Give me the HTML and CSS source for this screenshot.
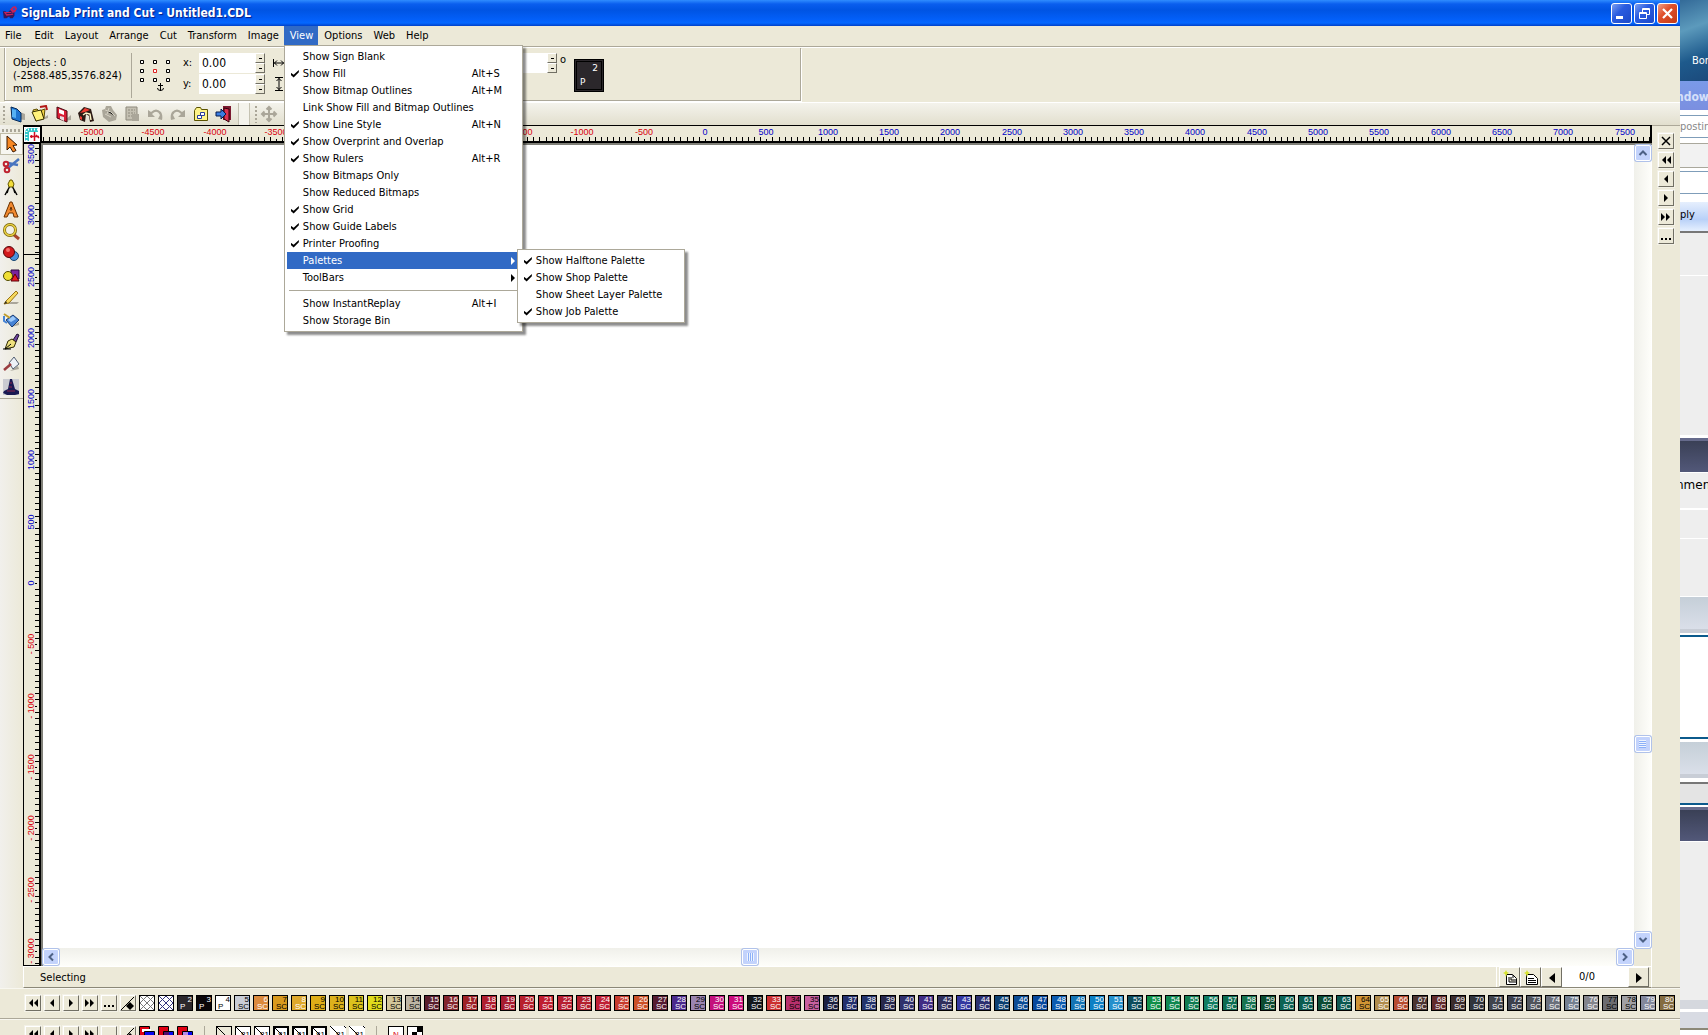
FILE: index.html
```html
<!DOCTYPE html>
<html lang="en">
<head>
    <meta charset="UTF-8" />
    <title>SignLab Print and Cut - Untitled1.CDL</title>
    <link rel="stylesheet" href="styles.css">
</head>
<body>
    <div class="app">
        <header class="titlebar">
            <svg class="logo" viewBox="0 0 18 18"><path d="M1 7h3l2 2 3-3 5 1v5l-2 3H9l-1-2-3 2H2z" fill="#35195c"/><path d="M9 5l3-3 3-1 2 3-2 4-3 1zM2 8h8l3 3-8 1z" fill="#c3225c"/><path d="M12 4l2-1 1 2-2 1z" fill="#1a56d8"/><path d="M5 9h6v1H5z" fill="#211a58"/></svg>
            <h1>SignLab Print and Cut - Untitled1.CDL</h1>
            <button class="win" aria-label="Minimize"><svg viewBox="0 0 19 19"><path d="M4 12h7v3H4z" fill="#fff"/></svg></button>
            <button class="win" aria-label="Restore"><svg viewBox="0 0 19 19"><path d="M7.500 8V4.500h7v6H12M7 5.500h8M4.500 8.500h7v6h-7zM4 9.500h8" fill="none" stroke="#fff"/></svg></button>
            <button class="win win-close" aria-label="Close"><svg viewBox="0 0 19 19"><path d="M5 5l9 9M14 5l-9 9" stroke="#fff" stroke-width="2.200"/></svg></button>
        </header>

        <nav class="menubar">
            <button>File</button>
            <button>Edit</button>
            <button>Layout</button>
            <button>Arrange</button>
            <button>Cut</button>
            <button>Transform</button>
            <button>Image</button>
            <div class="menu-holder">
                <button class="open">View</button>
                <div class="menu">
                    <button class="item"><i></i><span>Show Sign Blank</span></button>
                    <button class="item checked"><i></i><span>Show Fill</span><kbd>Alt+S</kbd></button>
                    <button class="item"><i></i><span>Show Bitmap Outlines</span><kbd>Alt+M</kbd></button>
                    <button class="item"><i></i><span>Link Show Fill and Bitmap Outlines</span></button>
                    <button class="item checked"><i></i><span>Show Line Style</span><kbd>Alt+N</kbd></button>
                    <button class="item checked"><i></i><span>Show Overprint and Overlap</span></button>
                    <button class="item checked"><i></i><span>Show Rulers</span><kbd>Alt+R</kbd></button>
                    <button class="item"><i></i><span>Show Bitmaps Only</span></button>
                    <button class="item"><i></i><span>Show Reduced Bitmaps</span></button>
                    <button class="item checked"><i></i><span>Show Grid</span></button>
                    <button class="item checked"><i></i><span>Show Guide Labels</span></button>
                    <button class="item checked"><i></i><span>Printer Proofing</span></button>
                    <div class="menu-holder">
                        <button class="item active more"><i></i><span>Palettes</span></button>
                        <div class="menu submenu">
                            <button class="item checked"><i></i><span>Show Halftone Palette</span></button>
                            <button class="item checked"><i></i><span>Show Shop Palette</span></button>
                            <button class="item"><i></i><span>Show Sheet Layer Palette</span></button>
                            <button class="item checked"><i></i><span>Show Job Palette</span></button>
                        </div>
                    </div>
                    <button class="item more"><i></i><span>ToolBars</span></button>
                    <hr>
                    <button class="item"><i></i><span>Show InstantReplay</span><kbd>Alt+I</kbd></button>
                    <button class="item"><i></i><span>Show Storage Bin</span></button>
                </div>
            </div>
            <button>Options</button>
            <button>Web</button>
            <button>Help</button>
        </nav>

        <section class="props">
            <div class="props-box">
                <p class="info">Objects : 0<br>(-2588.485,3576.824)<br>mm</p>
                <svg class="anchors" viewBox="0 0 34 36"><g fill="#fff" stroke="#000"><path d="M1.500 1.500h3v3h-3zM14.500 1.500h3v3h-3zM27.500 1.500h3v3h-3zM1.500 10.500h3v3h-3zM27.500 10.500h3v3h-3zM1.500 19.500h3v3h-3zM14.500 19.500h3v3h-3zM27.500 19.500h3v3h-3z"/><path d="M14.500 10.500h3v3h-3z" stroke="#d22"/></g><path d="M21.500 24v8M19 26.500h5M18.500 29q0 2.500 3 2.500t3-2.500" fill="none" stroke="#000"/></svg>
                <div class="coords">
                    <label for="pos-x">x:</label>
                    <input id="pos-x" type="text" value="0.00">
                    <span class="spin"><button aria-label="Increase x"></button><button aria-label="Decrease x"></button></span>
                    <svg viewBox="0 0 14 14"><path d="M1.500 3v8M12.500 3v8M2 7h10M5 4.500L2.500 7 5 9.500M9 4.500L11.500 7 9 9.500" fill="none" stroke="#000"/></svg>
                    <label for="pos-y">y:</label>
                    <input id="pos-y" type="text" value="0.00">
                    <span class="spin"><button aria-label="Increase y"></button><button aria-label="Decrease y"></button></span>
                    <svg viewBox="0 0 14 14"><path d="M3 .5h8M3 13.500h8M7 1v12M4.500 4L7 1.500 9.500 4M4.500 10L7 12.500 9.500 10" fill="none" stroke="#000"/></svg>
                </div>
                <div class="angle">
                    <input type="text" aria-label="Rotation angle">
                    <span class="spin"><button aria-label="Increase angle"></button><button aria-label="Decrease angle"></button></span>
                    <span class="degree">o</span>
                </div>
                <button class="fill-color"><b>2</b><span>P</span></button>
            </div>
        </section>

        <section class="toolbar">
            <span class="grip"></span>
            <button aria-label="New"><svg viewBox="0 0 18 18"><path d="M8 14l9 1v-6l-5-2z" fill="#aaa69a"/><path d="M3 2l6 2 4 4v9l-9-3z" fill="#1d74d0" stroke="#052a58"/><path d="M4 4l4 1v8l-4-1z" fill="#55b1f4"/></svg></button>
            <button aria-label="Open"><svg viewBox="0 0 18 18"><path d="M8 16l9-3v-3z" fill="#aaa69a"/><path d="M2 5l4-1 2 2 6-2-1 9-8 3z" fill="#efd043" stroke="#5c4b00"/><path d="M1 7l9-2 3 9-8 2z" fill="#fff27b" stroke="#332d00"/><path d="M9 2l6-1 1 4" fill="none" stroke="#b21616" stroke-width="2"/></svg></button>
            <button aria-label="Save"><svg viewBox="0 0 18 18"><path d="M10 16l7-1v-5z" fill="#aaa69a"/><path d="M3 2l10 4v11L3 13z" fill="#d81e35" stroke="#490812"/><path d="M5 4l5 2v4L5 8z" fill="#fff"/><path d="M6 11l4 1v4l-4-2z" fill="#e9dfe1"/></svg></button>
            <button aria-label="Import"><svg viewBox="0 0 18 18"><path d="M1 8l6-6 7 2 3 12-4 1-1-6-3-2-1 8-5-2z" fill="#2c1a14"/><path d="M3 8l5-5 5 2-5 2zM3 11l2 1v3l-2-1z" fill="#f03b31"/><path d="M6 10l3-2 4 1 1 6" fill="none" stroke="#fff6c9" stroke-width="1.500"/></svg></button>
            <button class="off" aria-label="Print"><svg viewBox="0 0 18 18"><path d="M6 1h5l2 4 4 5-1 5-7 2-6-5-1-7 3-1z" fill="#aaa699"/><path d="M5 5l6 2 4 4M5 9l6 3M9 3l-2 6" stroke="#d5d1c3"/></svg></button>
            <button class="off" aria-label="Paste"><svg viewBox="0 0 18 18"><path d="M3 2h11v13H3z" fill="#c4c0b2" stroke="#8d897c"/><path d="M5 5h7M5 8h7M5 11h7" stroke="#8d897c" stroke-dasharray="2 1"/><path d="M9 9h7v7H9z" fill="#aaa699"/></svg></button>
            <button class="off" aria-label="Undo"><svg viewBox="0 0 18 18"><path d="M2 5v7h7L6 9q5-5 8 1l-2 4 4 1q1-5-1-8-5-5-10 0z" fill="#aaa699"/></svg></button>
            <button class="off" aria-label="Redo"><svg viewBox="0 0 18 18"><path d="M16 5v7H9l3-3Q7 4 4 10l2 4-4 1Q1 10 3 7q5-5 10 0z" fill="#aaa699"/></svg></button>
            <button aria-label="Folder"><svg viewBox="0 0 18 18"><path d="M2.500 5.500l2-3h4l1 2h6v11h-13z" fill="#fdf389" stroke="#5b5300"/><path d="M8.500 7.500h4v3h-4zM5.500 10.500h4v3h-4z" fill="#fff" stroke="#273b9b"/></svg></button>
            <button aria-label="Exit"><svg viewBox="0 0 18 18"><path d="M8 1h8v14H8z" fill="#7b1930"/><path d="M9 3l5 1v13l-5-3z" fill="#dc3152" stroke="#32000b"/><path d="M11 9L6 4v3H1v4h5v3z" fill="#3b7de2" stroke="#071a4d"/></svg></button>
            <span class="break"></span>
            <span class="grip"></span>
            <button class="off" aria-label="Move"><svg viewBox="0 0 18 18"><path d="M9 2v14M2 9h14M6.500 4.500L9 2l2.500 2.500M6.500 13.500L9 16l2.500-2.500M4.500 6.500L2 9l2.500 2.500M13.500 6.500L16 9l-2.500 2.500" fill="none" stroke="#aaa699" stroke-width="2"/></svg></button>
            <button class="off" aria-label="Select area"><svg viewBox="0 0 18 18"><path d="M2 2h14v14H2z" fill="#c4c0b2" stroke="#8d897c" stroke-dasharray="2 1"/></svg></button>
        </section>

        <main class="workspace">
            <aside class="tools">
                <button class="on" aria-label="Select"><svg viewBox="0 0 18 18"><path d="M5 1l10 9-4 .5 3 5-3 1.500-3-5-3 3z" fill="#f78824" stroke="#3d1900"/></svg></button>
                <button aria-label="Cut"><svg viewBox="0 0 18 18"><path d="M17 2L6 11M16 8L6 6" stroke="#4774bf" stroke-width="2.500"/><circle cx="4" cy="7" r="2.300" fill="none" stroke="#be2231" stroke-width="2"/><circle cx="5" cy="13" r="2.300" fill="none" stroke="#be2231" stroke-width="2"/></svg></button>
                <button aria-label="Node edit"><svg viewBox="0 0 18 18"><path d="M8 7l-5 9M10 7l5 9M6 11l-1 3M12 11l1 3" fill="none" stroke="#000" stroke-width="1.500"/><path d="M8 1h2l2 4-1 3H7L6 5z" fill="#f3dd3b" stroke="#645700"/></svg></button>
                <button aria-label="Text"><svg viewBox="0 0 18 18"><path d="M12 16h5l-4-5z" fill="#aaa69a"/><path d="M8 1h2l6 15h-4l-1-4H7l-2 4H2zM8 9h2L9 6z" fill="#f28a30" fill-rule="evenodd" stroke="#693000"/></svg></button>
                <button aria-label="Zoom"><svg viewBox="0 0 18 18"><path d="M11 11l6 5" stroke="#a8452c" stroke-width="3"/><circle cx="8" cy="7" r="5.500" fill="#f3f1e7" stroke="#77620a" stroke-width="3"/><circle cx="8" cy="7" r="5.500" fill="none" stroke="#e8cf43" stroke-width="1.500"/></svg></button>
                <button aria-label="Weld"><svg viewBox="0 0 18 18"><circle cx="12" cy="11" r="4.500" fill="#4a91dc" stroke="#17456e"/><circle cx="7" cy="7" r="5.500" fill="#d3191c" stroke="#520608"/><circle cx="6" cy="5" r="2" fill="#f4726c"/></svg></button>
                <button aria-label="Shapes"><svg viewBox="0 0 18 18"><path d="M9 3h8v9H9z" fill="#7a239f" stroke="#29083a"/><circle cx="6" cy="9" r="4.500" fill="#f0df35" stroke="#4d4600"/><path d="M9 14l4-7 4 7z" fill="#e81d28" stroke="#5d0007"/></svg></button>
                <button aria-label="Draw"><svg viewBox="0 0 18 18"><path d="M4 15h11l2-2H9z" fill="#aaa69a"/><path d="M14 2l2 2-9 10-5 1 2-3z" fill="#f6d95d" stroke="#997313"/><path d="M2 15l2-3 1 2z" fill="#222"/></svg></button>
                <button aria-label="Fill"><svg viewBox="0 0 18 18"><path d="M9 16l8-2v-3z" fill="#aaa69a"/><path d="M4 9l7-5 6 5-7 7z" fill="#4683d5" stroke="#163971"/><path d="M6 9l5-4 3 3-5 3z" fill="#9cc9fa"/><path d="M2 3l6 4" fill="none" stroke="#c09c2c" stroke-width="2"/><path d="M2 5v5l3 2" fill="none" stroke="#4683d5" stroke-width="2"/></svg></button>
                <button aria-label="Pen"><svg viewBox="0 0 18 18"><path d="M11 7l4-6 2 1-3 7z" fill="#70459c" stroke="#1a102b"/><path d="M6 8l4-2 4 3-2 5-9 2z" fill="#efe17d" stroke="#2e2800"/><path d="M1 16h8M3 16l6-5" stroke="#000"/></svg></button>
                <button aria-label="Erase"><svg viewBox="0 0 18 18"><path d="M8 16l9-2-1-3z" fill="#aaa69a"/><path d="M7 8l5-6 5 7-6 5z" fill="#edf1f7" stroke="#505d70"/><path d="M2 15l7-6" stroke="#9a3c40" stroke-width="2.500"/></svg></button>
                <button aria-label="Wizard"><svg viewBox="0 0 18 18"><path d="M1 1h16v16H1z" fill="#c9cbd1"/><path d="M8 1h2l3 10 4 2v3l-4 1H5l-4-2 1-2 4-2z" fill="#191953"/><path d="M8 5h2M7 9h3M5 13h8" stroke="#8c274c"/></svg></button>
            </aside>

            <div class="view">
                <div class="corner"><svg viewBox="0 0 16 15"><path d="M1 1h13v4H5v9H1z" fill="#35c7ca"/><path d="M1 2.500h13M2.500 1v13" stroke="#fff" stroke-dasharray="1 2" stroke-width="2"/><path d="M10.500 5v9M6 9.500h9M7.500 8v3M12 8l3 3" stroke="#d01022" stroke-width="1.500"/></svg></div>
                <svg class="ruler ruler-x" id="ruler-x"></svg>
                <svg class="ruler ruler-y" id="ruler-y"></svg>
                <div class="sheet">
                    <div class="paper"></div>
                    <div class="scroll scroll-v">
                        <button aria-label="Scroll up"><svg viewBox="0 0 10 10"><path d="M1.500 7L5 3.500 8.500 7" /></svg></button>
                        <span class="space-before"></span>
                        <b class="thumb"></b>
                        <span class="space-after"></span>
                        <button aria-label="Scroll down"><svg viewBox="0 0 10 10"><path d="M1.500 3L5 6.500 8.500 3" /></svg></button>
                    </div>
                    <div class="scroll scroll-h">
                        <button aria-label="Scroll left"><svg viewBox="0 0 10 10"><path d="M7 1.500L3.500 5 7 8.500" /></svg></button>
                        <span class="space-before"></span>
                        <b class="thumb"></b>
                        <span class="space-after"></span>
                        <button aria-label="Scroll right"><svg viewBox="0 0 10 10"><path d="M3 1.500L6.500 5 3 8.500" /></svg></button>
                    </div>
                    <div class="scroll-end"></div>
                </div>
                <footer class="status">
                    <span class="message">Selecting</span>
                    <button aria-label="Add sheet copy"><svg viewBox="0 0 16 16"><path d="M4.500 4.500h6l4 4v6h-10zM7 7v5h7M9 7v3h5M11 5v3" fill="#fff" stroke="#000"/><path d="M1 3l2-1 1-2 1 2 2 1-2 1-1 3-1-3z" fill="#d7e32e"/></svg></button>
                    <button aria-label="Add sheet"><svg viewBox="0 0 16 16"><path d="M3.500 4.500h7l4 4v6h-11z" fill="#fff" stroke="#000"/><path d="M5 8.500h6M5 10.500h8M5 12.500h8" stroke="#000"/><path d="M1 3l2-1 1-2 1 2 2 1-2 1-1 3-1-3z" fill="#d7e32e"/></svg></button>
                    <button aria-label="Previous sheet"><svg viewBox="0 0 16 16"><path d="M11 3v10L5 8z"/></svg></button>
                    <input type="text" value="0/0" aria-label="Sheet">
                    <button aria-label="Next sheet"><svg viewBox="0 0 16 16"><path d="M5 3v10l6-5z"/></svg></button>
                </footer>
            </div>

            <aside class="dock">
                <button class="key" aria-label="Close palette"><svg viewBox="0 0 14 14"><path d="M3 3l8 8M11 3l-8 8" stroke="#000" stroke-width="1.500"/></svg></button>
                <button class="key" aria-label="First"><svg viewBox="0 0 14 14"><path d="M7 3v8L3 7zM12 3v8L8 7z"/></svg></button>
                <button class="key" aria-label="Previous"><svg viewBox="0 0 14 14"><path d="M9 3v8L5 7z"/></svg></button>
                <button class="key" aria-label="Next"><svg viewBox="0 0 14 14"><path d="M5 3v8l4-4z"/></svg></button>
                <button class="key" aria-label="Last"><svg viewBox="0 0 14 14"><path d="M2 3v8l4-4zM7 3v8l4-4z"/></svg></button>
                <button class="key" aria-label="More"><svg viewBox="0 0 14 14"><path d="M2 9h2v2H2zM6 9h2v2H6zM10 9h2v2h-2z"/></svg></button>
            </aside>
        </main>

        <section class="palette" id="palette">
            <button class="key" aria-label="First"><svg viewBox="0 0 14 14"><path d="M7 3v8L3 7zM12 3v8L8 7z"/></svg></button>
            <button class="key" aria-label="Previous"><svg viewBox="0 0 14 14"><path d="M9 3v8L5 7z"/></svg></button>
            <button class="key" aria-label="Next"><svg viewBox="0 0 14 14"><path d="M5 3v8l4-4z"/></svg></button>
            <button class="key" aria-label="Last"><svg viewBox="0 0 14 14"><path d="M2 3v8l4-4zM7 3v8l4-4z"/></svg></button>
            <button class="key" aria-label="More"><svg viewBox="0 0 14 14"><path d="M2 9h2v2H2zM6 9h2v2H6zM10 9h2v2h-2z"/></svg></button>
            <button class="key" aria-label="Pick"><svg viewBox="0 0 14 14"><path d="M0 14L13 1" stroke="#000"/><path d="M9 6l4 4-4 4-4-4z"/></svg></button>
            <button class="swatch" aria-label="No fill"><svg viewBox="0 0 14 14"><path d="M0 0h14v14H0z" fill="#fff"/><path d="M0 0l14 14M14 0L0 14M0 7l7 7 7-7-7-7z" fill="none" stroke="#777"/></svg></button>
            <button class="swatch" aria-label="No line"><svg viewBox="0 0 14 14"><path d="M0 0h14v14H0z" fill="#fff"/><path d="M0 0l14 14M14 0L0 14M0 7l7 7 7-7-7-7z" fill="none" stroke="#35357f"/></svg></button>
        </section>

        <section class="palette palette-last">
            <button class="key" aria-label="First"><svg viewBox="0 0 14 14"><path d="M7 3v8L3 7zM12 3v8L8 7z"/></svg></button>
            <button class="key" aria-label="Previous"><svg viewBox="0 0 14 14"><path d="M9 3v8L5 7z"/></svg></button>
            <button class="key" aria-label="Next"><svg viewBox="0 0 14 14"><path d="M5 3v8l4-4z"/></svg></button>
            <button class="key" aria-label="Last"><svg viewBox="0 0 14 14"><path d="M2 3v8l4-4zM7 3v8l4-4z"/></svg></button>
            <button class="key" aria-label="More"><svg viewBox="0 0 14 14"><path d="M2 9h2v2H2zM6 9h2v2H6zM10 9h2v2h-2z"/></svg></button>
            <button class="key" aria-label="Pick"><svg viewBox="0 0 14 14"><path d="M0 14L13 1" stroke="#000"/><path d="M9 6l4 4-4 4-4-4z"/></svg></button>
            <button class="bare" aria-label="Overlap 1"><svg viewBox="0 0 16 16"><path d="M.5.5h10v12H.5z" fill="#e00012" stroke="#000"/><path d="M3 3h9v3H3z" fill="#fff"/><path d="M5.500 5.500h10v10h-10z" fill="#0808f0" stroke="#000"/></svg></button>
            <button class="bare" aria-label="Overlap 2"><svg viewBox="0 0 16 16"><path d="M.5.5h10v12H.5z" fill="#e00012" stroke="#000"/><path d="M5.500 5.500h10v10h-10z" fill="#0808f0" stroke="#000"/><path d="M6 6h5v7H6z" fill="#560b6c"/></svg></button>
            <button class="bare" aria-label="Overlap 3"><svg viewBox="0 0 16 16"><path d="M.5.5h10v12H.5z" fill="#e00012" stroke="#000"/><path d="M5.500 5.500h10v10h-10z" fill="#0808f0" stroke="#000"/><path d="M6 6h5v7H6z" fill="#b58bea"/></svg></button>
            <span class="rule"></span>
            <button class="swatch" aria-label="Hairline"><svg viewBox="0 0 14 14"><path d="M0 0h14v14H0z" fill="#ece9d8"/><path d="M0 0l14 14" stroke="#000"/></svg></button>
            <button class="swatch pen"><span>.81</span></button>
            <button class="swatch pen"><span>.81</span></button>
            <button class="swatch pen thick"><span>.81</span></button>
            <button class="swatch pen thick"><span>.81</span></button>
            <button class="swatch pen thick"><span>.81</span></button>
            <button class="swatch pen open-end"><span>.81</span></button>
            <button class="swatch pen open-end"><span>.81</span></button>
            <span class="rule"></span>
            <button class="swatch pen red"><span>N</span></button>
            <button class="swatch" aria-label="Checker"><svg viewBox="0 0 14 14"><path d="M0 0h14v14H0z" fill="#fff"/><path d="M9 0h5v5H9zM4 5h5v5H4zM0 10h4v4H0z"/></svg></button>
        </section>
    </div>

    <!-- windows showing behind the application -->
    <div class="behind">
        <div class="desktop">Bor</div>
        <div class="b-title">ndow</div>
        <div class="b-field">postin</div>
        <div class="b-panel"></div>
        <div class="b-field b-empty"></div>
        <div class="b-reply">ply</div>
        <div class="b-gray g1"></div>
        <div class="b-gray g2"></div>
        <div class="b-dark"></div>
        <div class="b-gray b-comment">nmen</div>
        <div class="b-gray g3"></div>
        <div class="b-gray g4"></div>
        <div class="b-silver"></div>
        <div class="b-white"></div>
        <div class="b-silver"></div>
        <div class="b-bar"></div>
        <div class="b-dark"></div>
        <div class="b-gray b-rest"></div>
        <div class="b-foot"></div>
    </div>

    <script src="script.js"></script>
</body>
</html>
```
FILE: styles.css
```css
*{
    margin: 0;
    padding: 0;
    box-sizing: border-box;
}
html,body{
    height: 100%;
}
body{
    display: flex;
    overflow: hidden;
    background: #ece9d8;
    font: 11px/14px "DejaVu Sans Condensed", "Noto Sans", sans-serif;
    color: #000;
}
button,input{
    font: inherit;
    color: inherit;
    border: none;
    background: none;
}
svg{
    display: block;
}

.app{
    flex: 1;
    min-width: 0;
    height: 100%;
    display: flex;
    flex-direction: column;
}

/* title bar */
.titlebar{
    display: flex;
    align-items: center;
    gap: 2px;
    height: 26px;
    flex: none;
    padding: 0 2px;
    background: linear-gradient(#2f8cff 0, #0a5eee 4px, #0054e3 10px, #0360fa 20px, #0468ff 23px, #0040c8 26px);
}
.logo{
    width: 16px;
    height: 18px;
}
.titlebar h1{
    flex: 1;
    padding-left: 1px;
    font: bold 12px/18px "DejaVu Sans Condensed", "Noto Sans", sans-serif;
    color: #fff;
    text-shadow: 1px 1px 1px #0a1883;
}
.win{
    width: 21px;
    height: 21px;
    border: 1px solid #fff;
    border-radius: 3px;
    background: linear-gradient(135deg, #7c9ff0, #2a5ce0 40%, #1c49c8);
}
.win-close{
    background: linear-gradient(135deg, #f0a088, #e0502c 40%, #c33a14);
}

/* menus */
.menubar{
    display: flex;
    height: 20px;
    flex: none;
    background: #ece9d8;
}
.menubar > button,
.menubar > .menu-holder > button{
    height: 19px;
    padding: 0 5px 0 6px;
}
.menubar > button:first-child{
    padding: 0 7px 0 5px;
}
.menubar .open{
    background: #316ac5;
    color: #fff;
}
.menu-holder{
    position: relative;
}
.menu{
    position: absolute;
    z-index: 5;
    top: 19px;
    left: 0;
    width: 239px;
    padding: 2px;
    border: 1px solid #aca899;
    background: #fff;
    box-shadow: 3px 3px 2px rgba(0,0,0,.45);
}
.submenu{
    top: -3px;
    left: 230px;
    width: 168px;
}
.item{
    display: flex;
    align-items: center;
    width: 100%;
    height: 17px;
    text-align: left;
    white-space: nowrap;
}
.item i{
    width: 16px;
    height: 8px;
    flex: none;
}
.item.checked i::before{
    content: "";
    display: block;
    width: 8px;
    height: 8px;
    margin-left: 4px;
    background: #000;
    clip-path: polygon(0 40%, 0 70%, 35% 100%, 100% 35%, 100% 5%, 35% 65%);
}
.item span{
    width: 169px;
    flex: none;
}
.submenu .item span{
    width: auto;
}
.item kbd{
    font: inherit;
}
.item.more::after{
    content: "";
    margin-left: auto;
    margin-right: 5px;
    border: 4px solid transparent;
    border-left-color: currentColor;
    border-right: none;
}
.item.active{
    background: #316ac5;
    color: #fff;
}
.menu hr{
    height: 1px;
    margin: 4px 2px;
    border: none;
    background: #aca899;
}

/* object properties */
.props{
    display: flex;
    height: 56px;
    flex: none;
    padding: 1px 4px;
    border-top: 1px solid #aca899;
    box-shadow: inset 0 1px #fff;
}
.props-box{
    display: flex;
    padding: 5px 196px 0 8px;
    border: 1px solid #aca899;
    border-top: none;
    box-shadow: 1px 1px #fff, inset 1px 0 #fff;
}
.info{
    width: 119px;
    height: 45px;
    padding-top: 3px;
    border-right: 1px solid #aca899;
    line-height: 13px;
}
.anchors{
    width: 34px;
    height: 36px;
    margin: 6px 10px 0 7px;
}
.coords{
    display: grid;
    grid-template-columns: 16px 56px 10px 14px;
    grid-auto-rows: 20px;
    row-gap: 1px;
    align-items: center;
}
.coords svg{
    width: 14px;
    height: 14px;
    margin-left: 7px;
}
.coords input,
.angle input{
    width: 56px;
    height: 20px;
    padding-left: 3px;
    background: #fff;
    font-size: 12px;
}
.spin{
    display: flex;
    flex-direction: column;
    width: 10px;
    height: 20px;
}
.spin button{
    flex: 1;
    border: 1px solid;
    border-color: #fff #716f64 #716f64 #fff;
    background: linear-gradient(#000,#000) center / 3px 1px no-repeat #ece9d8;
}
.angle{
    display: flex;
    margin-left: 212px;
}
.degree{
    margin-left: 3px;
    line-height: 13px;
}
.fill-color{
    display: flex;
    flex-direction: column;
    justify-content: space-between;
    width: 30px;
    height: 33px;
    margin: 6px 0 0 8px;
    padding: 1px 3px;
    border: 3px double #000;
    background: #2b272b;
    color: #fff;
    font: 9px/11px "DejaVu Sans", sans-serif;
    text-align: left;
}
.fill-color b{
    align-self: flex-end;
    font-weight: normal;
}

/* standard toolbar */
.toolbar{
    display: flex;
    align-items: center;
    gap: 5px;
    height: 23px;
    flex: none;
    padding-left: 3px;
    background: linear-gradient(#f4f3ec, #e2dfce);
    border-top: 1px solid #fff;
}
.toolbar button,
.toolbar svg{
    width: 18px;
    height: 18px;
}
.grip{
    width: 2px;
    height: 17px;
    margin-right: -2px;
    background: repeating-linear-gradient(#aaa698 0 2px, transparent 2px 4px);
}
.break{
    width: 12px;
    height: 22px;
    border: solid #c5c2b2;
    border-width: 0 1px;
    background: #f4f3ec;
}

/* workspace */
.workspace{
    display: flex;
    flex: 1;
    min-height: 0;
}
.tools{
    width: 23px;
    background: linear-gradient(90deg, #f1f0ec, #ece9d8);
}
.tools::before{
    content: "";
    display: block;
    height: 3px;
    margin: 4px 2px 1px;
    background: repeating-linear-gradient(90deg, #aaa698 0 2px, transparent 2px 4px);
}
.tools button{
    display: block;
    width: 23px;
    height: 22px;
    padding: 2px;
}
.tools .on{
    background: #f7f6f1;
    border: 1px solid #c1bda9;
    padding: 1px;
}
.tools button:last-child{
    height: 24px;
    border-bottom: 1px solid #aca899;
}
.tools svg{
    width: 18px;
    height: 18px;
}
.view{
    display: grid;
    grid-template-columns: 18px 1fr;
    grid-template-rows: 18px 1fr 22px;
    flex: 1;
    min-width: 0;
}
.corner{
    border: 1px solid #000;
    border-top-width: 2px;
    background: #fff;
}
.corner svg{
    width: 16px;
    height: 15px;
}
.ruler{
    width: 100%;
    height: 100%;
    min-width: 0;
    min-height: 0;
    border: 1px solid #000;
    background: #ece9d8;
    font: 9px "Liberation Sans", sans-serif;
    text-anchor: middle;
}
.ruler-x{
    border-right-width: 2px;
    border-bottom-width: 2px;
}
.ruler-y{
    border-right-width: 2px;
}
.ruler .pos{
    fill: #0000c8;
}
.ruler .neg{
    fill: #d8000c;
}
.sheet{
    display: grid;
    grid-template-columns: 1fr 18px;
    grid-template-rows: 1fr 18px;
    border-top: 2px solid #808078;
    border-left: 2px solid #808078;
    min-height: 0;
}
.paper{
    background: #fff;
}
.scroll{
    display: flex;
    align-items: center;
    background: linear-gradient(90deg, #f0f0ea, #fefefa);
    border-right: 1px solid #fff;
}
.scroll-v{
    flex-direction: column;
}
.scroll-h{
    background: linear-gradient(#f0f0ea, #fefefa);
}
.scroll-end{
    border-right: 1px solid #fff;
}
.scroll button,
.thumb{
    display: flex;
    align-items: center;
    justify-content: center;
    width: 16px;
    height: 16px;
    flex: none;
    border: 1px solid #fff;
    border-radius: 2px;
    background: #c3d3fc;
    box-shadow: 0 0 0 1px #b0c2ea;
}
.scroll svg{
    width: 10px;
    height: 10px;
    fill: none;
    stroke: #4d6185;
    stroke-width: 2;
}
.thumb{
    background: repeating-linear-gradient(#eef4fe 0 1px, #8cb0f8 1px 2px) center / 7px 8px no-repeat #c3d3fc;
}
.scroll-h .thumb{
    background-image: repeating-linear-gradient(90deg, #eef4fe 0 1px, #8cb0f8 1px 2px);
}
.scroll-v .space-before{
    flex: 574;
}
.scroll-v .space-after{
    flex: 180;
}
.scroll-h .space-before{
    flex: 683;
}
.scroll-h .space-after{
    flex: 859;
}
.status{
    grid-column: 1 / 3;
    display: flex;
    align-items: stretch;
    padding-right: 2px;
    border: solid #fff;
    border-width: 1px 1px 0;
    border-bottom: 1px solid #8b8878;
}
.message{
    flex: 1;
    padding-left: 16px;
    line-height: 22px;
    border-right: 1px solid #fff;
    margin-right: 2px;
}
.status button{
    width: 21px;
    padding: 2px;
    border: 1px solid;
    border-color: #fff #716f64 #716f64 #fff;
}
.status svg{
    width: 16px;
    height: 16px;
}
.status input{
    width: 66px;
    padding-right: 16px;
    background: #fff;
    text-align: center;
}
.dock{
    display: flex;
    flex-direction: column;
    gap: 3px;
    width: 28px;
    padding: 7px 0 0 6px;
    border-top: 1px solid #aca899;
    border-bottom: 1px solid #aca899;
}
.key{
    width: 16px;
    height: 16px;
    flex: none;
    border: 1px solid;
    border-color: #fff #716f64 #716f64 #fff;
    background: #ece9d8;
    box-shadow: 0 0 0 1px #f3f1e6;
}
.key svg{
    width: 14px;
    height: 14px;
}

/* colour palettes */
.palette{
    display: flex;
    gap: 3px;
    height: 31px;
    flex: none;
    overflow: hidden;
    padding: 7px 0 0 25px;
    border-bottom: 1px solid #aca899;
    box-shadow: inset 0 1px #f8f7f0;
}
.palette-last{
    height: 16px;
    border: none;
}
.swatch,
.bare{
    width: 16px;
    height: 16px;
    flex: none;
    border: 1px solid #000;
    overflow: hidden;
    font: 8px/7px "Liberation Sans", sans-serif;
    text-align: right;
    color: #fff;
}
.bare{
    border: none;
}
.swatch span{
    display: block;
}
.swatch .left{
    text-align: left;
    padding-left: 2px;
}
.swatch.dark{
    color: #000;
}
.pen{
    background: linear-gradient(45deg, transparent 47%, #000 47% 53%, transparent 53%) #fff;
    color: #000;
    line-height: 9px;
}
.pen.thick{
    border-width: 2px;
    line-height: 7px;
}
.pen.open-end{
    border-color: transparent;
}
.pen.red{
    background: #fff;
    color: #d8000c;
    text-align: center;
}
.rule{
    width: 1px;
    margin: 0 8px;
    background: #aca899;
}

/* background windows */
.behind{
    width: 28px;
    flex: none;
    display: flex;
    flex-direction: column;
    overflow: hidden;
    background: #fff;
    white-space: nowrap;
}
.behind > div{
    flex: none;
}
.desktop{
    height: 81px;
    padding: 54px 0 0 12px;
    background: linear-gradient(160deg, #336a98, #5c9abc 35%, #1e5a8c 70%, #1b4a7c);
    color: #fff;
}
.b-title{
    height: 29px;
    background: linear-gradient(#7a9ae8, #7b8fe0);
    color: #d5e0fa;
    font: bold 12px/32px "DejaVu Sans Condensed", sans-serif;
    text-indent: -4px;
}
.b-field{
    height: 23px;
    margin: 5px 0;
    border: solid #7f9db9;
    border-width: 1px 0;
    color: #888;
    line-height: 22px;
}
.b-panel{
    height: 25px;
    background: #f2f2f2;
    border: solid #aaa89c;
    border-width: 1px 0;
}
.b-empty{
    margin: 3px 0 8px;
}
.b-reply{
    height: 31px;
    background: linear-gradient(#e6effd, #b9d1f8 60%, #e6f0ff);
    border-bottom: 2px solid #777;
    line-height: 26px;
}
.b-gray{
    background: #eee;
    margin-bottom: 1px;
}
.g1{
    height: 42px;
}
.g2{
    height: 159px;
    margin-bottom: 3px;
}
.b-dark{
    height: 34px;
    margin-bottom: 1px;
    border-top: 3px solid #666b8c;
    background: linear-gradient(#3a4056, #525879);
}
.b-comment{
    height: 35px;
    margin-bottom: 2px;
    font: 12px/24px "DejaVu Sans", sans-serif;
    text-indent: -4px;
}
.g3{
    height: 28px;
}
.g4{
    height: 57px;
}
.b-silver{
    height: 36px;
    margin-bottom: 2px;
    background: linear-gradient(#c5cfd8, #dadfe9);
    border-bottom: 4px solid #c8cdd6;
}
.b-white{
    height: 104px;
    margin-bottom: 3px;
    border: solid #0b5a8c;
    border-width: 2px 0;
}
.b-bar{
    height: 23px;
    margin: 2px 0;
    background: #e4e4e4;
    border-top: 2px solid #777;
    border-bottom: 2px solid #0b5a8c;
}
.b-rest{
    height: 158px;
    margin: 0;
}
.b-foot{
    height: 30px;
    background: linear-gradient(#d5d8de 9px, #fff 9px 12px, #d8dbe3 12px);
    border-bottom: 2px solid #8b8878;
}
```
FILE: script.js
```js
//build rulers and the colour palette
var NS = 'http://www.w3.org/2000/svg';

function add(parent, name, attrs, text){
    var el = document.createElementNS(NS, name);
    for (var key in attrs) {
        el.setAttribute(key, attrs[key]);
    }
    if(text !== undefined){
        el.textContent = text;
    }
    parent.appendChild(el);
}

//50 units per tick, 500 units per label
function drawRulerX(){
    var svg = document.getElementById('ruler-x');
    var width = svg.clientWidth;
    var step = 61.3;
    var zero = 663;
    svg.textContent = '';
    for (var i = -108; i < 170; i++) {
        var x = Math.round(zero + i * step / 10);
        if(x < 1 || x > width){
            continue;
        }
        add(svg, 'rect', {x: x, y: i % 10 ? 11 : 13, width: 1, height: 4});
        if(i % 10 === 0){
            add(svg, 'text', {x: x, y: 9, 'class': i < 0 ? 'neg' : 'pos'}, i * 50);
        }
    }
}

function drawRulerY(){
    var svg = document.getElementById('ruler-y');
    var height = svg.clientHeight;
    var step = 61.3;
    var zero = 439;
    svg.textContent = '';
    for (var i = -62; i < 74; i++) {
        var y = Math.round(zero - i * step / 10);
        if(y < 1 || y > height){
            continue;
        }
        add(svg, 'rect', {x: 11, y: y, width: i % 10 ? 4 : 2, height: 1});
        if(i % 10 === 0){
            add(svg, 'text', {transform: 'translate(10 ' + y + ') rotate(-90)', 'class': i < 0 ? 'neg' : 'pos'}, i < 0 ? '- ' + (-i * 50) : i * 50);
        }
    }
    //cursor position
    add(svg, 'rect', {x: 0, y: 110, width: 16, height: 1});
}

var colors = [
    '#2b272b','#0b0608','#ffffff','#c9cdd6','#dc8a3c','#d99a1e','#dfa92c','#dfae17','#dcb11c','#dcc21d',
    '#e0dc1c','#d2c79a','#bdb5a4','#5a1e2c','#84242c','#9e2226','#b01e2e','#a81c30','#b8202c','#c01e30',
    '#b81e30','#b4202e','#c02034','#c83c2c','#cc5026','#561c30','#4c2a8c','#9a84b0','#c4107c','#cc0c7c',
    '#14181c','#cc3030','#b8306c','#c860a0','#1c2040','#24306c','#24346c','#28284c','#30306c','#402c84',
    '#30305c','#3438a0','#2c3070','#0c4070','#0c4c94','#08489c','#0c5cb0','#1474b4','#0c80c4','#2490cc',
    '#0c4c5c','#109048','#108850','#107c50','#107c60','#0c6c50','#187450','#0c4c30','#0c6454','#0c5c50',
    '#0c4c34','#0c5850','#d09434','#b08c4c','#b84c30','#4c3430','#642c2c','#3c2c2c','#30343c','#40444c',
    '#3c404c','#50545c','#6c707c','#748090','#84848c','#6c6c70','#a0a0a4','#84889c','#846c40'
];
var darkText = [4,5,7,9,10,11,12,13,14,29,34,35,64,77,78];

function drawPalette(){
    var row = document.getElementById('palette');
    for (var i = 0; i < colors.length; i++) {
        var n = i + 2;
        var box = document.createElement('button');
        box.className = 'swatch' + (darkText.indexOf(n) > -1 ? ' dark' : '');
        box.style.background = colors[i];
        box.innerHTML = '<span>' + n + '</span>' + (n < 5 ? '<span class="left">P</span>' : '<span>SC</span>');
        row.appendChild(box);
    }
}

drawPalette();
drawRulerX();
drawRulerY();
window.onresize = function(){
    drawRulerX();
    drawRulerY();
}
```
